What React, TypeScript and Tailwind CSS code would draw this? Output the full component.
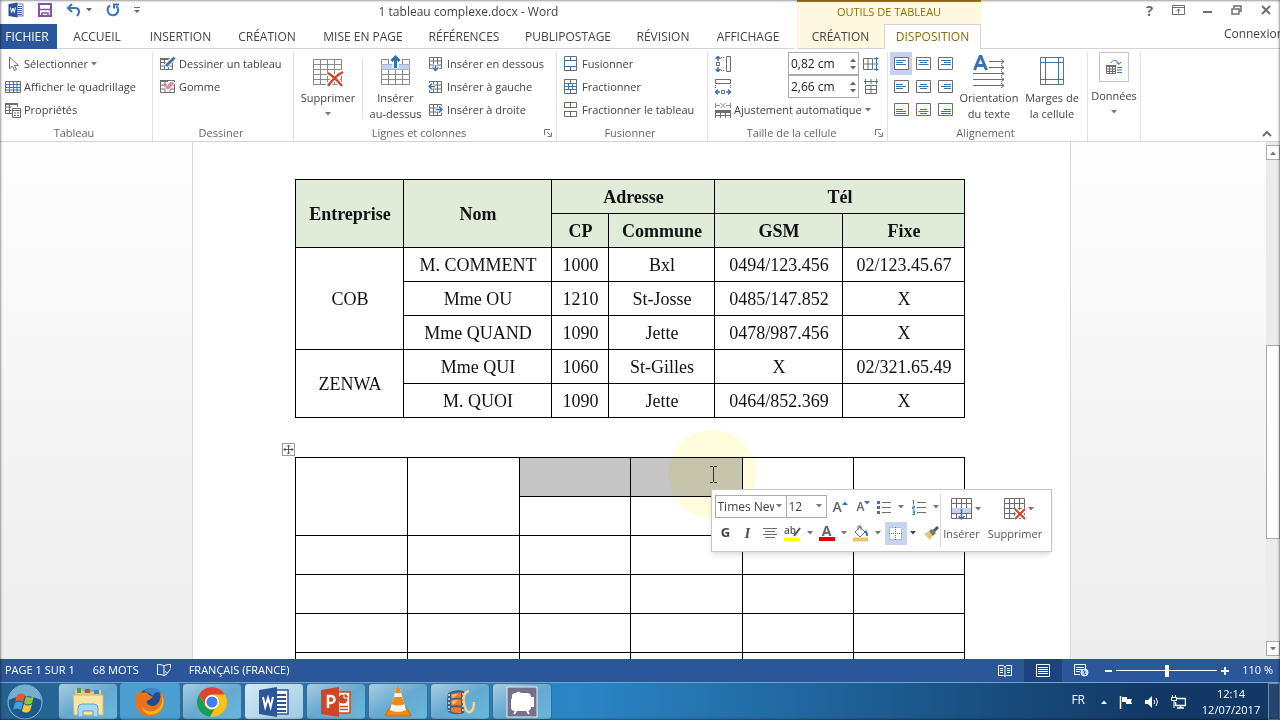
import { ReactNode } from "react";
import clsx from "clsx";

const GREY = "#6d6d6d";
const BLUE = "#3b73af";

/* ---------- small shared drawings ---------- */

function Caret({ className }: { className?: string }) {
  return (
    <svg width="6" height="4" viewBox="0 0 6 4" className={clsx("shrink-0", className)} aria-hidden="true">
      <path d="M0 0h6L3 3.5z" fill="currentColor" />
    </svg>
  );
}

function Launcher() {
  return (
    <svg width="8" height="8" viewBox="0 0 8 8" fill="none" stroke="#777" aria-hidden="true">
      <path d="M.5 6V.5H6M3 3l3.5 3.5M7.5 3.5v4h-4" />
    </svg>
  );
}

function Icon({ w = 16, h = 16, children }: { w?: number; h?: number; children: ReactNode }) {
  return (
    <svg width={w} height={h} viewBox={`0 0 ${w} ${h}`} fill="none" stroke={GREY} className="shrink-0" aria-hidden="true">
      {children}
    </svg>
  );
}

/* ---------- title bar ---------- */

function WordLogo({ size }: { size: number }) {
  return (
    <svg width={size} height={size} viewBox="0 0 32 32" aria-hidden="true">
      <rect x="16" y="4" width="14" height="24" fill="#fff" stroke="#2b579a" strokeWidth="1.5" />
      <path d="M19 9h9M19 13h9M19 17h9M19 21h9M19 25h9" stroke="#2b579a" strokeWidth="2" />
      <path d="M1 4 19 1v30L1 28z" fill="#2b579a" />
      <path d="m5 11 2.2 10L10 12l2.6 9L15 11" fill="none" stroke="#fff" strokeWidth="2" />
    </svg>
  );
}

function TitleBar() {
  return (
    <div className="flex h-6 items-stretch">
      <div className="flex w-36 items-center gap-3.5 pb-1 pl-2">
        <WordLogo size={16} />
        <button aria-label="Enregistrer">
          <Icon w={14} h={14}>
            <path d="M1 1h12v12H1z" stroke="#8950a4" strokeWidth="2" />
            <path d="M1 6.5h12M4 13v-3h6v3" stroke="#8950a4" strokeWidth="1.5" />
          </Icon>
        </button>
        <button aria-label="Annuler" className="flex items-center gap-1 text-[#666]">
          <Icon w={16} h={14}>
            <path d="M6 1 2 5l4 4M2 5h7c3 0 4 2 4 4 0 2-1 3-2 4" stroke="#3f78b8" strokeWidth="2.2" />
          </Icon>
          <Caret />
        </button>
        <button aria-label="Répéter">
          <Icon w={14} h={14}>
            <path d="M4 2.5a5.3 5.3 0 1 0 6.5.6M8 5.5V1.500h5" stroke="#3f78b8" strokeWidth="2.2" />
          </Icon>
        </button>
        <button aria-label="Personnaliser" className="text-[#666]">
          <Icon w={6} h={7}>
            <path d="M0 .5h6" />
            <path d="M0 3h6L3 6z" fill={GREY} stroke="none" />
          </Icon>
        </button>
      </div>
      <h1 className="w-[653px] pr-1 text-center text-[12px] leading-6 text-[#444]">1 tableau complexe.docx - Word</h1>
      <div className="w-[184px] border-t-2 border-[#b58a00] bg-[#fef8de] text-center text-[11px] leading-5 text-[#8a6d08]">
        OUTILS DE TABLEAU
      </div>
      <div className="flex flex-1 items-center justify-end pb-1 text-[#666] [&>button]:flex [&>button]:w-[29px] [&>button]:justify-center">
        <button aria-label="Aide" className="text-[15px] font-bold leading-5">?</button>
        <button aria-label="Options du ruban">
          <Icon w={13} h={10}>
            <path d="M.5.5h12v9H.5zM.5 2.500h12M6.500 8.500V4M4.500 6l2-2 2 2" />
          </Icon>
        </button>
        <button aria-label="Réduire">
          <Icon w={9} h={10}><path d="M0 7h9" strokeWidth="2" /></Icon>
        </button>
        <button aria-label="Restaurer">
          <Icon w={11} h={10}><path d="M3 3V1h7v5H8M1 4h7v5H1z" strokeWidth="1.500" /></Icon>
        </button>
        <button aria-label="Fermer">
          <Icon w={10} h={10}><path d="m1 1 8 8M9 1 1 9" strokeWidth="2" /></Icon>
        </button>
      </div>
    </div>
  );
}

const tabs = [
  "ACCUEIL",
  "INSERTION",
  "CRÉATION",
  "MISE EN PAGE",
  "RÉFÉRENCES",
  "PUBLIPOSTAGE",
  "RÉVISION",
  "AFFICHAGE",
];

function Tabs() {
  return (
    <div className="flex h-[25px] text-[12px] text-[#444]">
      <nav className="grid w-[797px] grid-cols-[57px_80px_87px_86px_106px_96px_112px_78px_92px]">
        <button className="bg-[#2b579a] pr-[3px] text-white">FICHIER</button>
        {tabs.map((tab) => (
          <button key={tab} className="border-b border-[#d4d4d4] pt-0.5">{tab}</button>
        ))}
      </nav>
      <button className="w-[87px] border-b border-[#d4d4d4] bg-[#fef8de] pt-0.5">CRÉATION</button>
      <button className="w-[97px] border-x border-t border-[#d4d4d4] text-[#8a6d08]">DISPOSITION</button>
      <div className="flex flex-1 items-start justify-end overflow-hidden border-b border-[#d4d4d4]">
        <a href="#connexion" className="-mr-1 leading-5">Connexion</a>
      </div>
    </div>
  );
}

/* ---------- ribbon ---------- */

function Group({ label, className, launcher, children }: {
  label?: string;
  className: string;
  launcher?: boolean;
  children: ReactNode;
}) {
  return (
    <section className={clsx("flex shrink-0 flex-col pt-[3px]", className)}>
      <div className="flex flex-1 border-r border-[#e1e1e1]">{children}</div>
      <div className="flex h-4 items-center border-r border-[#e1e1e1] pr-1 text-[#666]">
        <span className="flex-1 text-center leading-4">{label}</span>
        {launcher && <button aria-label={`Options ${label}`}><Launcher /></button>}
      </div>
    </section>
  );
}

function Row({ icon, caret, children }: { icon: ReactNode; caret?: boolean; children: ReactNode }) {
  return (
    <button className="flex h-[23px] items-center gap-[3px] whitespace-nowrap">
      {icon}
      <span className="pt-px">{children}</span>
      {caret && <Caret className="text-[#777]" />}
    </button>
  );
}

function BigButton({ icon, lines, caret, className }: {
  icon: ReactNode;
  lines: string[];
  caret?: boolean;
  className: string;
}) {
  return (
    <button className={clsx("flex flex-col items-center justify-start leading-4", className)}>
      <span className="flex h-[38px] items-center">{icon}</span>
      {lines.map((line) => (
        <span key={line} className="whitespace-nowrap">{line}</span>
      ))}
      {caret && <Caret className="mt-1.5 text-[#777]" />}
    </button>
  );
}

const miniGrid = "M.5.5h12v11H.5zM.5 4h12M.5 8h12M4.500.5v11M8.500.5v11";

function BigGrid({ children }: { children: ReactNode }) {
  return (
    <Icon w={34} h={34}>
      <path d="M2.500 5.500h28v25h-28zM2.500 10.500h28M2.500 15.500h28M2.500 20.500h28M2.500 25.500h28M9.500 5.500v25M16.500 5.500v25M23.500 5.500v25" stroke="#8a8a8a" />
      {children}
    </Icon>
  );
}

function DeleteGridIcon() {
  return (
    <BigGrid>
      <path d="M17 19c5 3 10 8 14 13M32 18c-6 3-11 8-15 14" stroke="#fff" strokeWidth="5" />
      <path d="M17 19c5 3 10 8 14 13M32 18c-6 3-11 8-15 14" stroke="#d2492a" strokeWidth="2.500" />
    </BigGrid>
  );
}

function MergeIcon({ kind }: { kind: "merge" | "split" | "table" }) {
  return (
    <Icon w={13} h={15}>
      {kind === "table" ? (
        <>
          <path d="M.5 5V.5h12V5M6.500.5V5M.5 10v4.500h12V10M6.500 10v4.500" />
          <path d="M0 5.500h13M0 9.500h13" stroke={BLUE} />
        </>
      ) : (
        <>
          <path d="M.5.5h12v14H.5zM6.500.5v4M6.500 10v4.500" />
          <path d="M0 4.500h13M0 10.500h13" stroke={BLUE} />
          {kind === "split" && <path d="M.5 7.500h12M4.500 5v5M8.500 5v5" stroke={BLUE} />}
        </>
      )}
    </Icon>
  );
}

function SizeField({ label, value }: { label: string; value: string }) {
  return (
    <div className="flex h-[23px] w-[71px] border border-[#ababab] bg-white">
      <input
        type="text"
        aria-label={label}
        defaultValue={value}
        className="w-[58px] pl-0.5 text-[12px] leading-5 text-[#222] outline-none"
      />
      <div className="flex flex-1 flex-col items-center justify-center gap-1 text-[#666]">
        <button aria-label={`Augmenter ${label}`}><Caret className="rotate-180" /></button>
        <button aria-label={`Diminuer ${label}`}><Caret /></button>
      </div>
    </div>
  );
}

// text lines inside the nine cell alignment buttons, row by row
const alignPaths = [
  "M2 3.500h10M2 5.500h7M2 7.500h10",
  "M2.500 3.500h10M4 5.500h7M2.500 7.500h10",
  "M3 3.500h10M6 5.500h7M3 7.500h10",
  "M2 4.500h7M2 6.500h10M2 8.500h7",
  "M4 4.500h7M2.500 6.500h10M4 8.500h7",
  "M6 4.500h7M3 6.500h10M6 8.500h7",
  "M2 6.500h7M2 8.500h10M2 10.500h10",
  "M4 6.500h7M2.500 8.500h10M4 10.500h7",
  "M6 6.500h7M3 8.500h10M3 10.500h10",
];

function Ribbon() {
  return (
    <div className="flex h-[93px] overflow-hidden border-b border-[#d4d4d4] text-[11px] text-[#444]">
      <Group label="Tableau" className="w-[153px]">
        <div className="flex flex-col pl-[5px]">
          <Row caret icon={<Icon><path d="M4.500 1v12l3-3 2 4.500 2-1-2-4h4z" /></Icon>}>Sélectionner</Row>
          <Row icon={<Icon><path d="M.5 2.500h15v11H.5z" /><path d="M1 5.500h14M1 8.500h14M1 11h14M4.500 3v10M8.500 3v10M12 3v10" stroke={BLUE} /></Icon>}>
            Afficher le quadrillage
          </Row>
          <Row icon={<Icon><path d="M7 11.500H.5v-10h12V5M.5 5h6M.5 8.500h6M4.500 3v8" /><path d="M0 2h13" strokeWidth="2" /><path d="M7.500 6.500h8v9h-8zM7.500 8.500h8" /><path d="M9 11h2M12 11h2M9 13.500h2M12 13.500h2" stroke={BLUE} /></Icon>}>
            Propriétés
          </Row>
        </div>
      </Group>

      <Group label="Dessiner" className="w-[141px]">
        <div className="flex flex-col pl-[7px]">
          <Row icon={<Icon><path d="M.5 2.500h12v11H.5zM.5 6.500h12M.5 10h12M4.500 3v10M8.500 3v10" /><path d="M0 3h13" strokeWidth="2" /><path d="M5.500 10.500 14 1.500" stroke="#fff" strokeWidth="5" /><path d="m6 10 8.500-8.500" stroke={BLUE} strokeWidth="3" /></Icon>}>
            Dessiner un tableau
          </Row>
          <Row icon={<Icon><path d="M.5 1.500h14v12H.5zM.5 6h14M.5 10h14M5 3v10M10 3v10" /><path d="M0 2h8" strokeWidth="2" /><path d="m5 8 6-6 4 2-6 7-4-1z" fill="#e98a9b" stroke="#fff" /></Icon>}>
            Gomme
          </Row>
        </div>
      </Group>

      <Group label="Lignes et colonnes" launcher className="w-[263px]">
        <BigButton caret className="w-[68px]" lines={["Supprimer"]} icon={<DeleteGridIcon />} />
        <div className="my-1.5 border-r border-[#e1e1e1]" />
        <BigButton
          className="w-[65px]"
          lines={["Insérer", "au-dessus"]}
          icon={
            <BigGrid>
              <path d="M2.500 10.500h28v5h-28z" fill="#c5d3ea" stroke="#9fb2cf" />
              <path d="M16.500 14V4M12 7.500 16.500 3 21 7.500" stroke="#fff" strokeWidth="6" />
              <path d="M16.500 14V3M12.500 7 16.500 3l4 4" stroke="#3373ae" strokeWidth="3" />
            </BigGrid>
          }
        />
        <div className="flex flex-col">
          <Row icon={<Icon><g transform="translate(1 1)"><path d={miniGrid} /><path d="M6.500 7v7M3.500 10.500l3 3 3-3" stroke="#fff" strokeWidth="4" /><path d="M6.500 8v6M3.500 10.500l3 3 3-3" stroke={BLUE} strokeWidth="1.500" /></g></Icon>}>
            Insérer en dessous
          </Row>
          <Row icon={<Icon><g transform="translate(1 2)"><path d={miniGrid} /><path d="M0 5.500h6M3 2.500l-3 3 3 3" stroke="#fff" strokeWidth="4" /><path d="M0 5.500h6M3 2.500l-3 3 3 3" stroke={BLUE} strokeWidth="1.500" /></g></Icon>}>
            Insérer à gauche
          </Row>
          <Row icon={<Icon><g transform="translate(1 2)"><path d={miniGrid} /><path d="M7 5.500h6M10 2.500l3 3-3 3" stroke="#fff" strokeWidth="4" /><path d="M7 5.500h6M10 2.500l3 3-3 3" stroke={BLUE} strokeWidth="1.500" /></g></Icon>}>
            Insérer à droite
          </Row>
        </div>
      </Group>

      <Group label="Fusionner" className="w-[151px]">
        <div className="flex flex-col pl-[7px] [&>button]:gap-[5px]">
          <Row icon={<MergeIcon kind="merge" />}>Fusionner</Row>
          <Row icon={<MergeIcon kind="split" />}>Fractionner</Row>
          <Row icon={<MergeIcon kind="table" />}>Fractionner le tableau</Row>
        </div>
      </Group>

      <Group label="Taille de la cellule" launcher className="w-[180px]">
        <div className="flex flex-1 flex-col pl-[7px] pr-2">
          <div className="flex h-[23px] items-center gap-1">
            <Icon><path d="M6 1.500h4M6 14.500h4" strokeDasharray="1 1" /><path d="M11.500.5h4v15h-4zM1.500 6.500h3v3h-3z" /><path d="M3 0v5M.5 3 3 .5 5.500 3M3 11v5M.5 13 3 15.500 5.500 13" stroke={BLUE} strokeWidth="1.500" /></Icon>
            <span className="flex-1" />
            <SizeField label="Hauteur" value="0,82 cm" />
            <button aria-label="Distribuer les lignes">
              <Icon><path d="M.5 2.500h9v11h-9zM.5 8h9M5 2.500v11" /><path d="M13.500 1v14M10.500 2.500h5M10.500 8h5M10.500 13.500h5" stroke={BLUE} /></Icon>
            </button>
          </div>
          <div className="flex h-[23px] items-center gap-1">
            <Icon><path d="M.5.5h15v4H.5zM6.500 11.500h3v3h-3z" /><path d="M.5 6v4M15.500 6v4" strokeDasharray="1 1" /><path d="M0 13h5M3 10.500.5 13 3 15.500M11 13h5M13 10.500l2.500 2.500-2.500 2.500" stroke={BLUE} strokeWidth="1.500" /></Icon>
            <span className="flex-1" />
            <SizeField label="Largeur" value="2,66 cm" />
            <button aria-label="Distribuer les colonnes">
              <Icon><path d="M2.500 6.500h11v8h-11zM2.500 10.500h11M8 6.500v8" /><path d="M1 2.500h14M2.500 0v5M8 0v5M13.500 0v5" stroke={BLUE} /></Icon>
            </button>
          </div>
          <Row caret icon={<Icon><path d="M.5 1v5M15.500 1v5M1 3.500h4M11 3.500h4M5.500 1l5 5M10.500 1l-5 5" stroke="#7d8fa5" /><path d="M0 9.500h16" strokeWidth="3" /><path d="M.5 10v6M5.500 10v6M10.500 10v6M15.500 10v6M0 13.500h16" /></Icon>}>
            Ajustement automatique
          </Row>
        </div>
      </Group>

      <Group label="Alignement" className="w-[200px]">
        <div className="ml-0.5 grid grid-cols-[22px_22px_22px] grid-rows-[23px_23px_23px]">
          {alignPaths.map((d, i) => (
            <button
              key={d}
              aria-label={`Alignement ${i + 1}`}
              className={clsx("flex items-center justify-center", i === 0 && "bg-[#c5d1ee]")}
            >
              <Icon w={15} h={13}>
                <path d="M.5.5h14v12H.5z" fill="#fff" />
                <path d={d} stroke={BLUE} />
              </Icon>
            </button>
          ))}
        </div>
        <BigButton
          className="w-[66px]"
          lines={["Orientation", "du texte"]}
          icon={
            <Icon w={34} h={34}>
              <path d="M2.500 16 8 2.500h1L14.500 16M5 11.500h7" stroke={BLUE} strokeWidth="3" />
              <path d="M17 7.500h15M17 13.500h15M1 19.500h31M1 25.500h31M1 31.500h31M29 5l3 2.500-3 2.500M29 11l3 2.500-3 2.500M29 17l3 2.500-3 2.500M29 23l3 2.500-3 2.500M29 29l3 2.500-3 2.500" />
            </Icon>
          }
        />
        <BigButton
          className="w-[60px]"
          lines={["Marges de", "la cellule"]}
          icon={
            <Icon w={24} h={30}>
              <path d="M.5 1.500h23v27H.5z" />
              <path d="M5.500 1v28M18.500 1v28M0 6.500h24M0 23.500h24" stroke={BLUE} />
            </Icon>
          }
        />
      </Group>

      <Group className="w-[53px]">
        <BigButton
          caret
          className="w-[52px] [&>span:first-child]:h-9 [&>span:first-child]:items-start"
          lines={["Données"]}
          icon={
            <span className="flex h-[30px] w-[30px] items-center justify-center border border-[#c6c6c6]">
              <Icon>
                <path d="M.5 6.500h9v8h-9zM1 10h8M1 12.500h8M3.500 7v7M6.500 7v7" />
                <path d="M0 7h10" strokeWidth="2" />
                <path d="M5 4c1-3 6-4 8 1M10.500 3.500l2.500 2 2-2.500M11 8.500h5M11 11h5M11 13.500h5" stroke={BLUE} />
              </Icon>
            </span>
          }
        />
      </Group>

      <div className="flex flex-1 items-end justify-end pb-1 pr-2">
        <button aria-label="Réduire le ruban">
          <Icon w={10} h={7}><path d="m1 6 4-4 4 4" strokeWidth="2" /></Icon>
        </button>
      </div>
    </div>
  );
}

/* ---------- document ---------- */

const rows = [
  { company: "COB", span: 3, cells: ["M. COMMENT", "1000", "Bxl", "0494/123.456", "02/123.45.67"] },
  { cells: ["Mme OU", "1210", "St-Josse", "0485/147.852", "X"] },
  { cells: ["Mme QUAND", "1090", "Jette", "0478/987.456", "X"] },
  { company: "ZENWA", span: 2, cells: ["Mme QUI", "1060", "St-Gilles", "X", "02/321.65.49"] },
  { cells: ["M. QUOI", "1090", "Jette", "0464/852.369", "X"] },
];

function ContactTable() {
  return (
    <table className="w-[670px] table-fixed border-collapse text-center font-['Liberation_Serif',serif] text-[18px] leading-6 text-[#111] [&_td]:border [&_td]:border-black [&_td]:p-0 [&_td]:pl-0.5 [&_th]:border [&_th]:border-black [&_th]:bg-[#e1ecd8] [&_th]:p-0 [&_th]:pl-0.5 [&_tr]:h-[34px]">
      <colgroup>
        <col className="w-[108px]" />
        <col className="w-[148px]" />
        <col className="w-[57px]" />
        <col className="w-[106px]" />
        <col className="w-[128px]" />
        <col />
      </colgroup>
      <thead>
        <tr>
          <th rowSpan={2}>Entreprise</th>
          <th rowSpan={2}>Nom</th>
          <th colSpan={2}>Adresse</th>
          <th colSpan={2}>Tél</th>
        </tr>
        <tr>
          <th>CP</th>
          <th>Commune</th>
          <th>GSM</th>
          <th>Fixe</th>
        </tr>
      </thead>
      <tbody>
        {rows.map((row) => (
          <tr key={row.cells[0]}>
            {row.company && <td rowSpan={row.span}>{row.company}</td>}
            {row.cells.map((cell, i) => (
              <td key={i}>{cell}</td>
            ))}
          </tr>
        ))}
      </tbody>
    </table>
  );
}

function EmptyTable() {
  return (
    <table className="mt-[39px] w-[670px] table-fixed border-collapse [&_td]:border [&_td]:border-black [&_tr]:h-[39px]">
      <colgroup>
        <col className="w-[112px]" />
        <col className="w-[112px]" />
        <col className="w-[111px]" />
        <col className="w-[112px]" />
        <col className="w-[111px]" />
        <col />
      </colgroup>
      <tbody>
        <tr>
          <td rowSpan={2} />
          <td rowSpan={2} />
          <td className="bg-[#c6c6c6]" />
          <td className="bg-[#c6c6c6]" />
          <td />
          <td />
        </tr>
        <tr>
          <td /><td /><td /><td />
        </tr>
        {[0, 1, 2, 3].map((r) => (
          <tr key={r}>
            <td /><td /><td /><td /><td /><td />
          </tr>
        ))}
      </tbody>
    </table>
  );
}

function MiniSelect({ label, options, className }: {
  label: string;
  options: string[];
  className: string;
}) {
  return (
    <div className={clsx("relative h-[23px] border border-[#ababab]", className)}>
      <select aria-label={label} className="h-full w-full appearance-none pl-0.5 pr-3 text-[12px] text-[#444] outline-none">
        {options.map((o) => <option key={o}>{o}</option>)}
      </select>
      <Caret className="pointer-events-none absolute right-1 top-2 text-[#777]" />
    </div>
  );
}

function MiniToolbar() {
  return (
    <div className="absolute left-[518px] top-[347px] flex w-[341px] border border-[#c6c6c6] bg-white py-1 pl-[3px] pr-1.5 text-[11px] text-[#555] shadow-md">
      <div className="flex flex-col">
        <div className="flex h-[25px] items-center">
          <MiniSelect label="Police" options={["Times New Roman", "Calibri"]} className="w-[72px]" />
          <MiniSelect label="Taille" options={["12", "14"]} className="-ml-px w-[41px]" />
          <div className="flex items-center pl-1.5 text-[#777]">
            <button aria-label="Agrandir la police" className="flex w-6 items-start text-[14px] font-semibold leading-5 text-[#666]">
              A<Caret className="mt-1 rotate-180 text-[#3b73af]" />
            </button>
            <button aria-label="Réduire la police" className="flex w-5 items-start text-[12px] font-semibold leading-5 text-[#666]">
              A<Caret className="mt-1 text-[#3b73af]" />
            </button>
            <button aria-label="Puces" className="flex w-[35px] items-center gap-[7px]">
              <Icon w={14} h={14}>
                <path d="M5 2.500h9M5 7.500h9M5 12.500h9" />
                <path d="M0 2.500h3M0 7.500h3M0 12.500h3" stroke={BLUE} strokeWidth="3" />
              </Icon>
              <Caret />
            </button>
            <button aria-label="Numérotation" className="flex w-[28px] items-center gap-[7px]">
              <Icon w={14} h={16}>
                <path d="M5 3.500h9M5 8.500h9M5 13.500h9" />
                <path d="M.5 1.500h1v4M.5 7h2v1.500h-2V10h2M.5 12h2v3.500h-2M1 13.500h1.500" stroke={BLUE} />
              </Icon>
              <Caret />
            </button>
          </div>
        </div>
        <div className="flex h-7 items-center text-[#777]">
          <button className="w-[22px] text-[13px] font-bold text-[#444]">G</button>
          <button className="w-[22px] font-['Liberation_Serif',serif] text-[15px] font-bold italic text-[#555]">I</button>
          <button aria-label="Centrer" className="flex w-[22px] justify-center">
            <Icon w={14} h={12}><path d="M0 1.500h14M2 4.500h10M0 7.500h14M2 10.500h10" /></Icon>
          </button>
          <button aria-label="Surligner" className="flex w-8 items-center justify-end gap-1.5">
            <Icon w={17} h={17}>
              <text x="0" y="9" fontSize="10" fontWeight="600" fill="#555" stroke="none">ab</text>
              <path d="m10 11 6-8" stroke="#555" strokeWidth="2" />
              <path d="M0 14.500h16" stroke="#ffff00" strokeWidth="4" />
            </Icon>
            <Caret />
          </button>
          <button aria-label="Couleur de police" className="flex w-[34px] items-center justify-end gap-1.5">
            <span className="flex w-4 flex-col items-center">
              <span className="h-3 text-[14px] font-bold leading-3 text-[#666]">A</span>
              <span className="h-1 w-full bg-[#e00000]" />
            </span>
            <Caret />
          </button>
          <button aria-label="Trame de fond" className="flex w-[34px] items-center justify-end gap-1.5">
            <Icon w={17} h={17}>
              <path d="m3 7 5-5 5 5-5 5z" fill="#fff" />
              <path d="M6 5V1h3v4" />
              <path d="M13 6c2 1 2 3 2 5" stroke={BLUE} strokeWidth="2" />
              <path d="M1 14.500h15" stroke="#edc46b" strokeWidth="4" />
            </Icon>
            <Caret />
          </button>
          <button aria-label="Bordures" className="ml-1 flex h-[23px] w-[22px] items-center justify-center bg-[#c5d5f0]">
            <Icon w={13} h={13}>
              <path d="M.5.5h12v12H.5z" fill="#fff" stroke="#8299bd" strokeDasharray="1 1" />
              <path d="M6.500 0v13M0 6.500h13" strokeDasharray="1 1" />
            </Icon>
          </button>
          <Caret className="ml-[3px] text-[#444]" />
          <button aria-label="Reproduire la mise en forme" className="ml-2">
            <Icon w={15} h={15}>
              <path d="m0 8 5-3 4 4-3 5z" fill="#edc27a" stroke="none" />
              <path d="m5 5 3-2 4 4-3 3z" fill="#777" stroke="none" />
              <path d="m10 5 4-4" stroke="#555" strokeWidth="3" />
            </Icon>
          </button>
        </div>
      </div>
      <div className="ml-auto flex border-l border-[#d8d8d8]">
        <button className="flex w-[42px] flex-col items-center">
          <span className="flex h-[30px] items-center gap-0.5 pl-2 text-[#777]">
            <Icon w={22} h={22}>
              <path d="M.5.5h20v20H.5zM.5 5.500h20M5.500.5v20M10.500.5v20M15.500.5v20M.5 15.500h20" />
              <path d="M1 10h19v5H1z" fill="#c5d3ea" stroke="none" />
              <path d="M10.500 11v10M7.500 18l3 3 3-3" stroke={BLUE} strokeWidth="1.500" />
            </Icon>
            <Caret />
          </span>
          <span className="leading-5">Insérer</span>
        </button>
        <button className="flex w-[65px] flex-col items-center">
          <span className="flex h-[30px] items-center gap-0.5 pl-2 text-[#777]">
            <Icon w={22} h={22}>
              <path d="M.5.5h20v20H.5zM.5 5.500h20M5.500.5v20M10.500.5v20M15.500.5v20M.5 10.500h20M.5 15.500h20" />
              <path d="m11 11 10 10M21 11 11 21" stroke="#fff" strokeWidth="5" />
              <path d="m11 11 10 10M21 11 11 21" stroke="#d2492a" strokeWidth="2" />
            </Icon>
            <Caret />
          </span>
          <span className="leading-5">Supprimer</span>
        </button>
      </div>
    </div>
  );
}

function ScrollBar() {
  return (
    <div className="flex w-[14px] flex-col bg-[#ebebeb] py-[3px]">
      <button aria-label="Défiler vers le haut" className="flex h-[15px] items-center justify-center border border-[#ababab] bg-white text-[#777]">
        <Caret className="rotate-180" />
      </button>
      <div className="grow-[187]" />
      <div className="grow-[193] border border-[#ababab] bg-white" />
      <div className="grow-[103]" />
      <button aria-label="Défiler vers le bas" className="flex h-[15px] items-center justify-center border border-[#ababab] bg-white text-[#777]">
        <Caret />
      </button>
    </div>
  );
}

function DocumentArea() {
  return (
    <main className="flex min-h-0 flex-1 bg-linear-to-b from-[#fefefe] to-[#ededed]">
      <div className="flex flex-1 justify-center overflow-hidden pr-1">
        <article className="relative w-[879px] shrink-0 border-x border-[#d9d9d9] bg-white pl-[102px] pt-[37px]">
          <ContactTable />
          <EmptyTable />
          <button aria-label="Déplacer le tableau" className="absolute left-[89px] top-[301px] border border-[#999] bg-white">
            <Icon w={11} h={11}>
              <path d="M5.500 1v9M1 5.500h9M4 2.500l1.500-1.500L7 2.500M4 8.500 5.500 10 7 8.500M2.500 4 1 5.500 2.500 7M8.500 4 10 5.500 8.500 7" stroke="#555" />
            </Icon>
          </button>
          <span className="absolute left-[475px] top-[288px] h-[88px] w-[88px] rounded-full bg-[#fffddb] mix-blend-multiply" />
          <svg width="9" height="17" viewBox="0 0 9 17" fill="none" stroke="#333" className="absolute left-[516px] top-[324px]" aria-hidden="true">
            <path d="M1 .5h2.500l1 1 1-1H8M4.500 1.500v14M1 16.500h2.500l1-1 1 1H8" />
          </svg>
          <MiniToolbar />
        </article>
      </div>
      <ScrollBar />
    </main>
  );
}

/* ---------- status bar ---------- */

function StatusBar() {
  return (
    <footer className="flex h-[23px] shrink-0 items-center bg-[#2b579a] pl-[5px] pr-[7px] text-[11px] text-white">
      <div className="flex items-center gap-[18px]">
        <span>PAGE 1 SUR 1</span>
        <span>68 MOTS</span>
        <button aria-label="Vérification">
          <svg width="14" height="13" viewBox="0 0 14 13" fill="none" stroke="#fff" aria-hidden="true">
            <path d="M7 2v9.500M7 2C5.500.8 3 .5.5.5v10c2.500 0 5 0 6.500 1.500 1-1 2-1.500 3-1.500M7 2C8.500.8 11 .5 13.500.5V4M8 7l2 2.500L13.500 5" />
          </svg>
        </button>
        <span>FRANÇAIS (FRANCE)</span>
      </div>
      <div className="ml-auto flex h-full items-center">
        <button aria-label="Mode Lecture" className="flex w-[38px] justify-center">
          <svg width="14" height="12" viewBox="0 0 14 12" fill="none" stroke="#fff" aria-hidden="true">
            <path d="M.5.5h5L7 2l1.500-1.500h5v10h-5L7 11.500l-1.500-1h-5zM7 2v9M2 3.500h3M2 5.500h3M2 7.500h3M9 3.500h3M9 5.500h3M9 7.500h3" />
          </svg>
        </button>
        <button aria-label="Page" className="flex h-full w-[38px] items-center justify-center bg-[#1c437f]">
          <svg width="14" height="13" viewBox="0 0 14 13" fill="none" stroke="#fff" aria-hidden="true">
            <path d="M.5.5h13v12H.5zM2 3.500h10M2 5.500h10M2 7.500h10M2 9.500h10" />
          </svg>
        </button>
        <button aria-label="Web" className="flex w-[38px] justify-center">
          <svg width="15" height="13" viewBox="0 0 15 13" fill="none" stroke="#fff" aria-hidden="true">
            <path d="M6 10.500H.5V.5h11V5M2 3.500h8M2 5.500h6M2 7.500h4" />
            <circle cx="10.500" cy="8.500" r="3.500" fill="#b9cce8" />
            <path d="M9 6.500l2 1-1 2 2 1.500" stroke="#2b579a" />
          </svg>
        </button>
        <button aria-label="Zoom arrière" className="flex w-4 justify-center">
          <svg width="7" height="8" aria-hidden="true"><path d="M0 4h7" stroke="#fff" strokeWidth="2" /></svg>
        </button>
        <input
          type="range"
          aria-label="Zoom"
          defaultValue={51}
          className="h-3 w-[101px] appearance-none bg-[linear-gradient(white,white)] bg-[length:100%_1px] bg-center bg-no-repeat [&::-webkit-slider-thumb]:h-3 [&::-webkit-slider-thumb]:w-1 [&::-webkit-slider-thumb]:appearance-none [&::-webkit-slider-thumb]:bg-white"
        />
        <button aria-label="Zoom avant" className="ml-1 flex w-2 justify-center">
          <svg width="8" height="8" aria-hidden="true"><path d="M0 4h8M4 0v8" stroke="#fff" strokeWidth="2" /></svg>
        </button>
        <span className="w-11 text-right">110 %</span>
      </div>
    </footer>
  );
}

/* ---------- taskbar ---------- */

function AppIcon({ children }: { children: ReactNode }) {
  return <svg width="32" height="32" viewBox="0 0 32 32" aria-hidden="true">{children}</svg>;
}

const apps = [
  {
    name: "Explorateur",
    icon: (
      <AppIcon>
        <path d="M3 4h7l2 2h9l2-2h6v25H2z" fill="#e9cf7d" />
        <path d="M5 2h4v5H5z" fill="#4fa24a" />
        <path d="M13 3h5v4h-5z" fill="#c64d36" />
        <path d="M22 4h5v4h-5z" fill="#3c8ec2" />
        <path d="M1 9h30v20H2z" fill="#f7e6a1" stroke="#d6b95c" />
        <path d="M6 31v-9q0-4 4-4h12q4 0 4 4v9h-5v-6H11v6z" fill="#a6d8f2" stroke="#5ba4ce" />
      </AppIcon>
    ),
  },
  {
    name: "Firefox",
    plain: true,
    icon: (
      <AppIcon>
        <circle cx="17" cy="15" r="13" fill="#1f4d94" />
        <path d="M10 5c5-5 13-4 17 2-4-2-7 0-8 3-3-3-6-4-9-5z" fill="#3c87cc" />
        <path d="M3 8c1-3 2-4 2-4l3 3c4-2 6 0 7 2l4 2-4 3c-3 0-3 3 0 5 5 3 10-1 11-6 1-3 0-6-1-8 8 7 6 16 1 21-6 6-16 6-21 0C1 21 0 14 3 8z" fill="#e8731c" />
        <path d="M27 6c3 8 1 15-5 18-5 3-11 1-14-3 1 6 7 9 13 7 9-3 11-14 6-22z" fill="#f8b51d" />
      </AppIcon>
    ),
  },
  {
    name: "Chrome",
    icon: (
      <AppIcon>
        <circle cx="16" cy="16" r="15" fill="#fbc116" />
        <path d="M3 8.500a15 15 0 0 1 26 0H16a7.500 7.500 0 0 0-6.500 11z" fill="#dc4437" />
        <path d="M3 8.500 9.500 20a7.500 7.500 0 0 0 9 3L14 31A15 15 0 0 1 3 8.500z" fill="#1b9b5a" />
        <circle cx="16" cy="16" r="7" fill="#fff" />
        <circle cx="16" cy="16" r="5.500" fill="#3f7fe8" />
      </AppIcon>
    ),
  },
  { name: "Word", icon: <WordLogo size={32} />, active: true },
  {
    name: "PowerPoint",
    icon: (
      <AppIcon>
        <path d="M16 6h14v21H16z" fill="#fff" stroke="#d04525" strokeWidth="1.500" />
        <circle cx="23" cy="13" r="4.500" fill="#d04525" />
        <path d="M24 12V7.500a4.500 4.500 0 0 1 4.500 4.500z" fill="#d04525" stroke="#fff" />
        <path d="M20 20.500h8M20 23.500h8" stroke="#d04525" strokeWidth="1.500" />
        <path d="M1 4 19 1v30L1 28z" fill="#d04525" />
        <path d="M8 22V10h3a3.500 3.500 0 0 1 0 7H8" fill="none" stroke="#fff" strokeWidth="2.500" />
      </AppIcon>
    ),
  },
  {
    name: "VLC",
    icon: (
      <AppIcon>
        <path d="M7 22h18l4 8H3z" fill="#f08a12" stroke="#c86a08" />
        <path d="M14.500 1h3L24 24q-8 4-16 0z" fill="#f5f5f5" />
        <path d="M14.500 1h3l1.500 6h-6zM12 11h8l2.500 7q-6.500 3-13 0z" fill="#f08a12" />
      </AppIcon>
    ),
  },
  {
    name: "Movie Maker",
    icon: (
      <AppIcon>
        <path d="M4 7q7-4 16-2v22q-9 3-16-1-2-9 0-19z" fill="#3f5f80" />
        <path d="M7 8q5-2 10-1.500v5.500q-5-.5-10 .5zM7 14q5-1 10-.5v6q-5-.5-10 0zM7 21.500q5-.5 10 0V27q-5 .5-10-1.500z" fill="#ee7a2c" />
        <path d="M8 9q3-1 6-1l-5 4zM8 15q3-1 6-1l-5 5z" fill="#f9c784" />
        <path d="M5 8v17M19 7v19" stroke="#d6e4ef" strokeWidth="1.500" strokeDasharray="2 2" />
        <path d="M25 5c-5 1-6 6-5 12s3 10 6 9 4-5 4-10" fill="none" stroke="#efd68c" strokeWidth="2.500" />
      </AppIcon>
    ),
  },
  {
    name: "Enregistreur",
    icon: (
      <AppIcon>
        <path d="M1 1h30v30H1z" fill="#75718c" stroke="#eee" />
        <path d="M6 12q-1-5 4-5 2-3 5 0h6q4 0 4 4h3v10h-3q0 4-4 4H9q-4 0-4-4v-7z" fill="#fff" />
        <path d="m10 25-2 3M21 25l2 3" stroke="#fff" strokeWidth="2" />
      </AppIcon>
    ),
  },
];

function TaskBar() {
  return (
    <div className="flex h-[38px] shrink-0 items-stretch border-t border-[#6fa5cd] bg-linear-to-r from-[#24618f] via-[#2b86c6] via-45% to-[#123965] to-90% text-white">
      <button aria-label="Démarrer" className="flex w-[58px] items-center pl-1.5">
        <svg width="38" height="36" viewBox="0 0 38 36" aria-hidden="true">
          <circle cx="19" cy="18" r="17" fill="#1c5a8c" stroke="#8cc4e6" />
          <path d="M3 16a16 15 0 0 1 32 0q-16-8-32 0z" fill="#77aed0" />
          <path d="M11 11q4-3 8 0l-2 7q-4-3-8 0z" fill="#e8582c" />
          <path d="M20 12q4 3 8 0l-2 7q-4 3-8 0z" fill="#8cc63e" />
          <path d="M9 19q4-3 8 0l-2 7q-4-3-8 0z" fill="#3ba3e0" />
          <path d="M18 20q4 3 8 0l-2 7q-4 3-8 0z" fill="#fcc832" />
        </svg>
      </button>
      <div className="flex gap-0.5">
        {apps.map((app) => (
          <button
            key={app.name}
            aria-label={app.name}
            className={clsx(
              "flex w-[60px] items-center justify-center rounded-sm border",
              app.plain ? "border-transparent bg-[#4a9fd0]" : "border-[#3a6d90]",
              app.active && "bg-linear-to-br from-[#d5e9f3] to-[#9ccbe4]",
              !app.active && !app.plain && "bg-linear-to-br from-[#a6cde2] via-[#66a9d0] to-[#68b8de]"
            )}
          >
            {app.icon}
          </button>
        ))}
      </div>
      <div className="ml-auto flex items-center gap-3">
        <span className="mr-1 pb-1 text-[12px]">FR</span>
        <button aria-label="Icônes cachées"><Caret className="rotate-180" /></button>
        <svg width="14" height="14" viewBox="0 0 14 14" aria-hidden="true">
          <path d="M1.500 1v13" stroke="#fff" strokeWidth="1.500" />
          <path d="M3 2h5v2h5l-1 2 1 3H7V7H3z" fill="#fff" />
        </svg>
        <svg width="14" height="14" viewBox="0 0 14 14" fill="none" stroke="#fff" aria-hidden="true">
          <path d="M0 5h3l4-4v12L3 9H0z" fill="#fff" stroke="none" />
          <path d="M9 5q1.500 2 0 4M11 3q3 4 0 8" />
        </svg>
        <svg width="15" height="14" viewBox="0 0 15 14" fill="none" stroke="#fff" aria-hidden="true">
          <path d="M5 3.500h9.500v7H4.500V7M6 13h7M9.500 11v2" strokeWidth="1.500" />
          <path d="M1.500 0v3M4.500 0v3M.5 2.500h5v3h-5zM3 5v8" />
        </svg>
        <div className="w-[66px] text-center text-[11px] leading-4">
          <p>12:14</p>
          <p>12/07/2017</p>
        </div>
        <button aria-label="Afficher le bureau" className="-ml-2 h-full w-3 border border-[#6c8bab] bg-[#24466e]" />
      </div>
    </div>
  );
}

export default function App() {
  return (
    <div className="relative flex h-screen min-h-[480px] flex-col overflow-hidden bg-white font-['Open_Sans','Noto_Sans',sans-serif]">
      <header className="shrink-0">
        <TitleBar />
        <Tabs />
        <Ribbon />
      </header>
      <DocumentArea />
      <StatusBar />
      <TaskBar />
      <div className="pointer-events-none absolute inset-0 shadow-[inset_0_0_3px_rgba(0,0,0,0.8)]" />
    </div>
  );
}
